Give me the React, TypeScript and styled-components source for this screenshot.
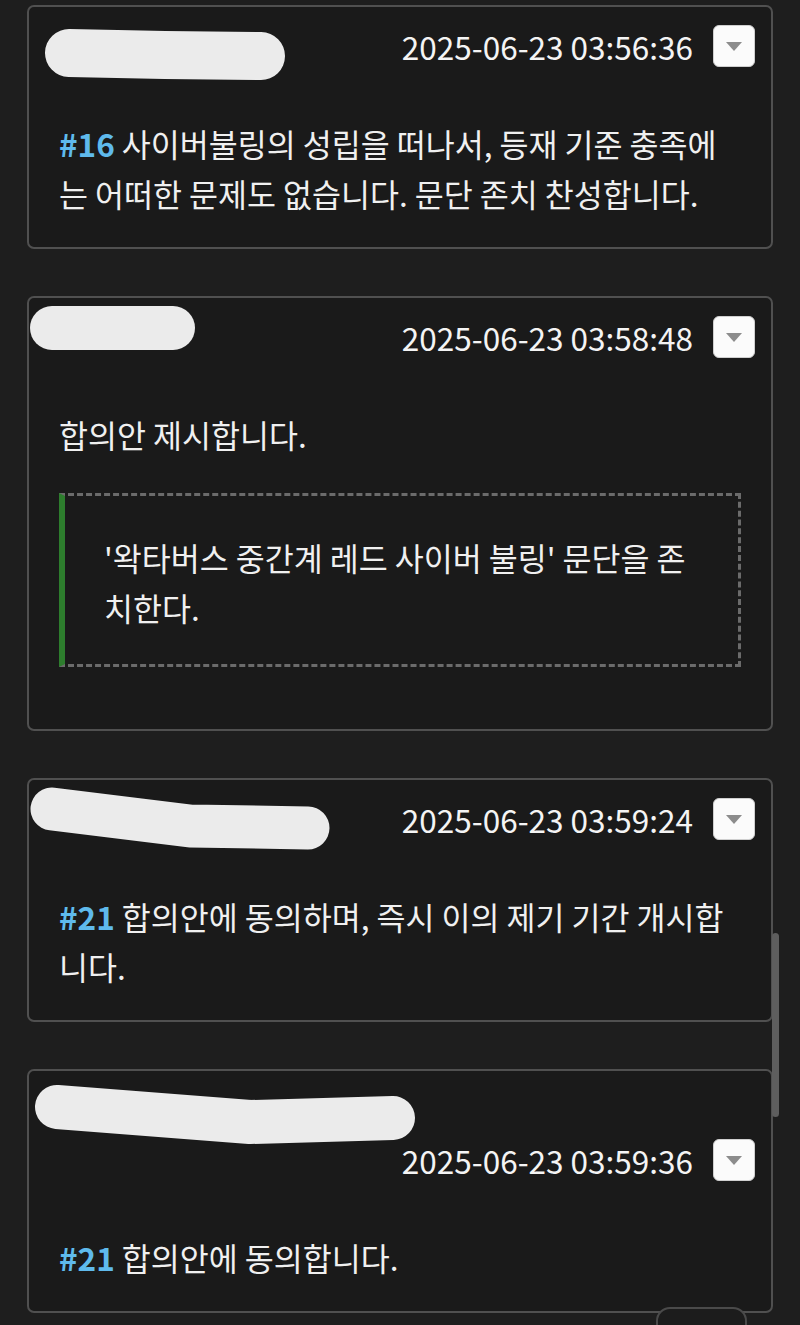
import React from 'react';
import styled, { createGlobalStyle } from 'styled-components';

const GlobalStyle = createGlobalStyle`
  html, body {
    margin: 0;
    padding: 0;
    background: #1e1e1e;
  }
  body {
    font-family: "Noto Sans CJK KR", "Noto Sans", sans-serif;
    color: #f0f0f0;
  }
`;

const Page = styled.div`
  position: relative;
  height: 1325px;
  overflow: hidden;
  padding: 5px 27px 0;
  box-sizing: border-box;
  display: flex;
  flex-direction: column;
  gap: 47px;
`;

const Card = styled.div`
  background: #1a1a1a;
  border: 2px solid #505050;
  border-radius: 7px;
`;

const Header = styled.div`
  display: flex;
  flex-wrap: wrap;
  align-items: center;
  row-gap: 8px;
  padding: 18px 16px 22px 30px;
`;

const Name = styled.div<{ $width: number }>`
  position: relative;
  width: ${({ $width }) => $width}px;
  height: 42px;
`;

const Redaction = styled.svg<{ $left: number; $top: number }>`
  position: absolute;
  left: ${({ $left }) => $left}px;
  top: ${({ $top }) => $top}px;
  overflow: visible;
`;

const Meta = styled.div`
  margin-left: auto;
  display: flex;
  align-items: center;
  gap: 20px;
`;

const Time = styled.span`
  font-size: 31.5px;
  line-height: 42px;
  color: #f4f4f4;
`;

const MenuButton = styled.button`
  width: 42px;
  height: 42px;
  padding: 2px 0 0;
  background: #fbfbfb;
  border: 1px solid #cfcfcf;
  border-radius: 6px;
  display: grid;
  place-items: center;
`;

const Body = styled.div`
  padding: 29px 30px;
  font-size: 31.5px;
  line-height: 50px;
`;

const Para = styled.p`
  margin: 0;
`;

const Ref = styled.span`
  color: #5fbaec;
  font-weight: 700;
`;

const Quote = styled.blockquote`
  margin: 34px 0 33px;
  border: 3px dashed #6b6b6b;
  border-left: 6px solid #2d7d2d;
  padding: 36px 38px 32px 39px;
`;

const ScrollThumb = styled.div`
  position: absolute;
  left: 772px;
  top: 933px;
  width: 7px;
  height: 184px;
  background: #5e5e5e;
  border-radius: 4px;
`;

const FloatButton = styled.button`
  position: absolute;
  left: 656px;
  top: 1307px;
  width: 91px;
  height: 44px;
  padding: 0;
  background: #1c1c1c;
  border: 2px solid #4a4a4a;
  border-radius: 14px;
`;

type BlobShape = { left: number; top: number; width: number; height: number; stroke: number; points: string };

type Comment = {
  id: number;
  nameWidth: number;
  blob: BlobShape;
  time: string;
  body: React.ReactNode;
};

const comments: Comment[] = [
  {
    id: 1,
    nameWidth: 226,
    blob: { left: -14, top: 3, width: 240, height: 52, stroke: 48, points: '24,25 120,27 216,28' },
    time: '2025-06-23 03:56:36',
    body: (
      <Para>
        <Ref>#16</Ref> 사이버불링의 성립을 떠나서, 등재 기준 충족에는 어떠한 문제도 없습니다. 문단 존치 찬성합니다.
      </Para>
    ),
  },
  {
    id: 2,
    nameWidth: 136,
    blob: { left: -29, top: -10, width: 165, height: 44, stroke: 44, points: '22,22 143,22' },
    time: '2025-06-23 03:58:48',
    body: (
      <>
        <Para>합의안 제시합니다.</Para>
        <Quote>
          <Para>'왁타버스 중간계 레드 사이버 불링' 문단을 존치한다.</Para>
        </Quote>
      </>
    ),
  },
  {
    id: 3,
    nameWidth: 271,
    blob: { left: -29, top: -10, width: 300, height: 62, stroke: 43, points: '22,21 160,38 278,40' },
    time: '2025-06-23 03:59:24',
    body: (
      <Para>
        <Ref>#21</Ref> 합의안에 동의하며, 즉시 이의 제기 기간 개시합니다.
      </Para>
    ),
  },
  {
    id: 4,
    nameWidth: 380,
    blob: { left: -24, top: -4, width: 380, height: 60, stroke: 44, points: '22,22 215,37 358,33' },
    time: '2025-06-23 03:59:36',
    body: (
      <Para>
        <Ref>#21</Ref> 합의안에 동의합니다.
      </Para>
    ),
  },
];

export default function App() {
  return (
    <Page>
      <GlobalStyle />
      {comments.map(c => (
        <Card key={c.id}>
          <Header>
            <Name $width={c.nameWidth} aria-label="redacted">
              <Redaction
                $left={c.blob.left}
                $top={c.blob.top}
                width={c.blob.width}
                height={c.blob.height}
                viewBox={`0 0 ${c.blob.width} ${c.blob.height}`}
              >
                <polyline
                  points={c.blob.points}
                  fill="none"
                  stroke="#ebebeb"
                  strokeWidth={c.blob.stroke}
                  strokeLinecap="round"
                  strokeLinejoin="round"
                />
              </Redaction>
            </Name>
            <Meta>
              <Time>{c.time}</Time>
              <MenuButton type="button">
                <svg width="16" height="10" viewBox="0 0 16 10">
                  <polygon points="0,0 16,0 8,9" fill="#8c8c8c" />
                </svg>
              </MenuButton>
            </Meta>
          </Header>
          <Body>{c.body}</Body>
        </Card>
      ))}
      <ScrollThumb />
      <FloatButton type="button" />
    </Page>
  );
}
